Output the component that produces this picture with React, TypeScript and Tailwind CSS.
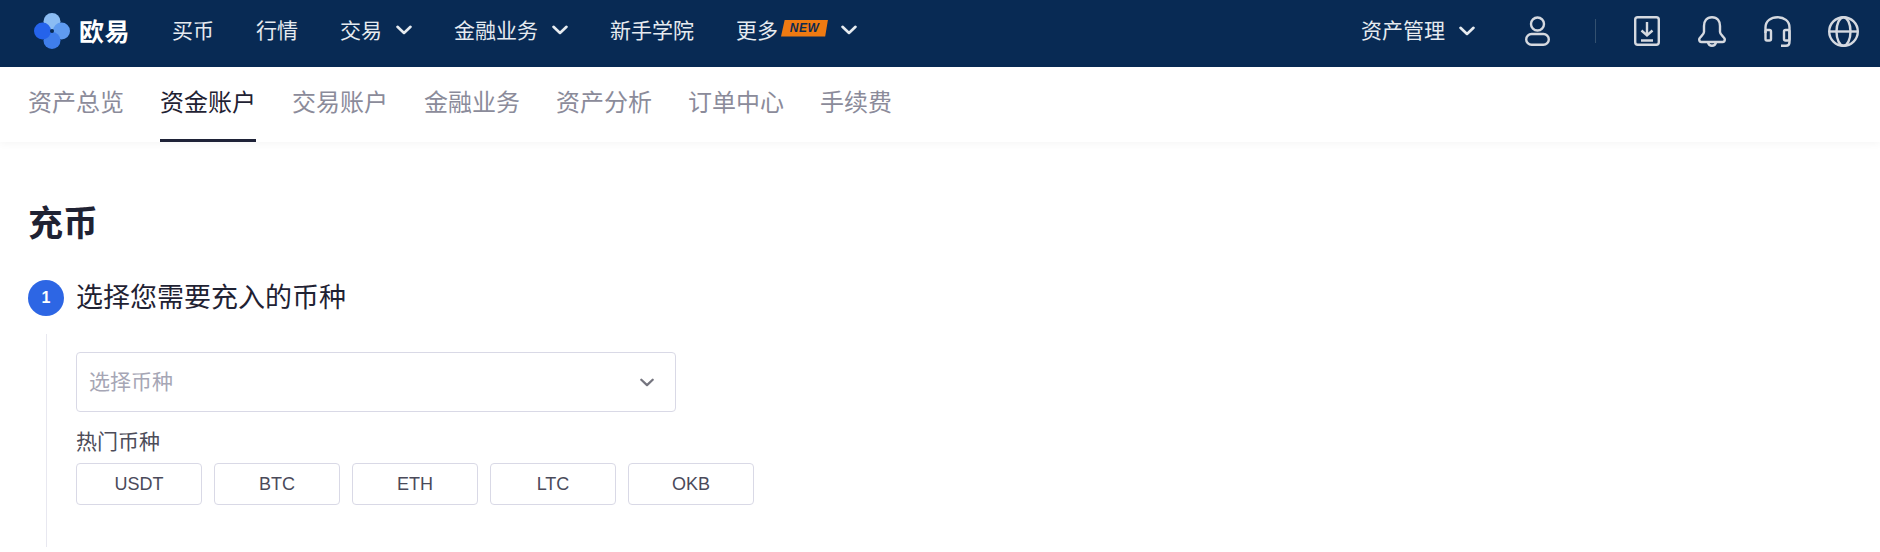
const FONT = "font-['Liberation_Sans','Noto_Sans_CJK_SC',sans-serif]";

const Chevron = ({ className }: { className: string }) => (
  <svg viewBox="0 0 16 10" fill="none" stroke="currentColor" strokeWidth="2.6" strokeLinecap="round" strokeLinejoin="round" className={className}>
    <path d="M1.5 1.8 8 8l6.5-6.2" />
  </svg>
);

const Logo = () => (
  <svg viewBox="0 0 36 36" className="w-[36px] h-[36px]">
    <circle cx="18" cy="8.5" r="8.5" fill="#8bbcf3" />
    <circle cx="27.5" cy="18" r="8.5" fill="#5f9bf0" />
    <circle cx="18" cy="27.5" r="8.5" fill="#3f7eec" />
    <circle cx="8.5" cy="18" r="8.5" fill="#2563eb" />
    <circle cx="18" cy="18" r="2" fill="#082a54" />
  </svg>
);

const NewBadge = () => (
  <span className="relative -top-[2px] ml-[3px] flex items-center justify-center w-[47px] h-[17px] bg-[#ee7a12] [clip-path:polygon(8%_0,100%_0,94%_100%,0_100%)] text-[#0d2a50] text-[12px] font-bold italic tracking-[0.5px] leading-none">
    NEW
  </span>
);

const NAV = [
  { label: '买币' },
  { label: '行情' },
  { label: '交易', arrow: true },
  { label: '金融业务', arrow: true },
  { label: '新手学院' },
  { label: '更多', arrow: true, badge: true },
];

const TABS = ['资产总览', '资金账户', '交易账户', '金融业务', '资产分析', '订单中心', '手续费'];
const COINS = ['USDT', 'BTC', 'ETH', 'LTC', 'OKB'];

export default function App() {
  return (
    <div className={`${FONT} h-[552px] bg-white overflow-hidden`}>
      {/* Top bar */}
      <header className="h-[67px] bg-[#082a54] flex items-center pl-[34px] pr-[21px] pb-[5px] text-[#e6ebf0]">
        <Logo />
        <span className="ml-[9px] mt-[2px] w-[52px] text-[25px] tracking-[0.5px] leading-none font-bold text-white whitespace-nowrap">欧易</span>
        <nav className="ml-[41px] mb-[2px] flex items-center gap-[42px]">
          {NAV.map((n) => (
            <div key={n.label} className="flex items-center text-[21px] leading-none">
              <span>{n.label}</span>
              {n.badge && <NewBadge />}
              {n.arrow && <Chevron className={`w-[16px] h-[10px] ${n.badge ? 'ml-[13px]' : 'ml-[14px]'}`} />}
            </div>
          ))}
        </nav>
        <div className="ml-auto flex items-center">
          <span className="mb-[2px] text-[21px] leading-none">资产管理</span>
          <Chevron className="w-[16px] h-[10px] ml-[14px]" />
          <svg viewBox="0 0 25 30" fill="none" stroke="#d5d9e0" strokeWidth="2.400" className="ml-[50px] w-[25px] h-[30px]">
            <circle cx="12.500" cy="8" r="6.500" />
            <rect x="1.200" y="18" width="22.600" height="10.800" rx="5.400" />
          </svg>
          <div className="ml-[45px] w-px h-[24px] bg-[#33506f]" />
          <svg viewBox="0 0 26 30" fill="none" stroke="#d5d9e0" strokeWidth="2.400" className="ml-[38px] w-[26px] h-[30px]">
            <rect x="1.200" y="1.200" width="23.600" height="27.600" rx="2.500" />
            <path d="M13 6v13M7.500 14.500l5.500 5 5.500-5M7 24.500h12" />
          </svg>
          <svg viewBox="0 0 28 31" fill="none" stroke="#d5d9e0" strokeWidth="2.400" className="ml-[38px] w-[28px] h-[31px]">
            <path d="M14 1.200C8.500 1.200 6 5 6 10v6c0 3-4.800 5-4.800 7.500C1.200 25 2 26 3.500 26h21c1.500 0 2.300-1 2.300-2.500 0-2.500-4.800-4.500-4.800-7.500v-6c0-5-2.500-8.800-8-8.800Z" />
            <path d="M10 26.500c.5 2 2 3.300 4 3.300s3.500-1.300 4-3.300" />
          </svg>
          <svg viewBox="0 0 27 31" fill="none" stroke="#d5d9e0" strokeWidth="2.400" className="ml-[38px] w-[27px] h-[31px]">
            <path d="M1.500 17v-5.500C1.500 5 7 1.200 13.500 1.200s12 3.800 12 10.300V26c0 2.500-1 3.800-3.500 3.800h-5" />
            <rect x="1.500" y="14" width="5.500" height="10.500" rx="1.500" />
            <rect x="20" y="14" width="5.500" height="10.500" rx="1.500" />
          </svg>
          <svg viewBox="0 0 31 31" fill="none" stroke="#d5d9e0" strokeWidth="2.400" className="ml-[37px] w-[31px] h-[31px]">
            <circle cx="15.500" cy="15.500" r="14.300" />
            <ellipse cx="15.500" cy="15.500" rx="7" ry="14.300" />
            <path d="M1 15.500h29" />
          </svg>
        </div>
      </header>

      {/* Account tabs */}
      <div className="h-[75px] bg-white flex items-end gap-[36px] pl-[28px] shadow-[0_2px_8px_rgba(0,0,0,0.04)]">
        {TABS.map((t, i) => (
          <div
            key={t}
            className={`h-[75px] flex items-center text-[24px] leading-none border-b-[3px] ${
              i === 1 ? 'text-[#1f2233] border-[#1f2338]' : 'text-[#8b8b9a] border-transparent'
            }`}
          >
            {t}
          </div>
        ))}
      </div>

      {/* Deposit form */}
      <main className="pl-[28px] pt-[60px]">
        <h1 className="text-[35px] leading-[44px] font-bold text-[#1f2233]">充币</h1>
        <div className="mt-[34px] flex items-center h-[36px]">
          <span className="w-[36px] h-[36px] rounded-full bg-[#2d66e4] text-white text-[16px] font-bold flex items-center justify-center">1</span>
          <span className="ml-[12px] text-[27px] leading-none text-[#1f2233]">选择您需要充入的币种</span>
        </div>
        <div className="ml-[18px] mt-[18px] h-[213px] border-l border-[#e8e8f0] pl-[29px] pt-[18px]">
          <div className="w-[600px] h-[60px] rounded-[4px] border border-[#d9d9e6] flex items-center justify-between pl-[12px] pr-[21px]">
            <span className="pb-[2px] text-[21px] leading-none text-[#a6a6b5]">选择币种</span>
            <Chevron className="w-[14px] h-[9px] text-[#75757f]" />
          </div>
          <div className="mt-[18px] text-[21px] leading-[24px] text-[#4c4c59]">热门币种</div>
          <div className="mt-[9px] flex gap-[12px]">
            {COINS.map((c) => (
              <div key={c} className="w-[126px] h-[42px] rounded-[4px] border border-[#d9d9e6] flex items-center justify-center text-[18px] leading-none text-[#4a4a5a]">
                {c}
              </div>
            ))}
          </div>
        </div>
      </main>
    </div>
  );
}
